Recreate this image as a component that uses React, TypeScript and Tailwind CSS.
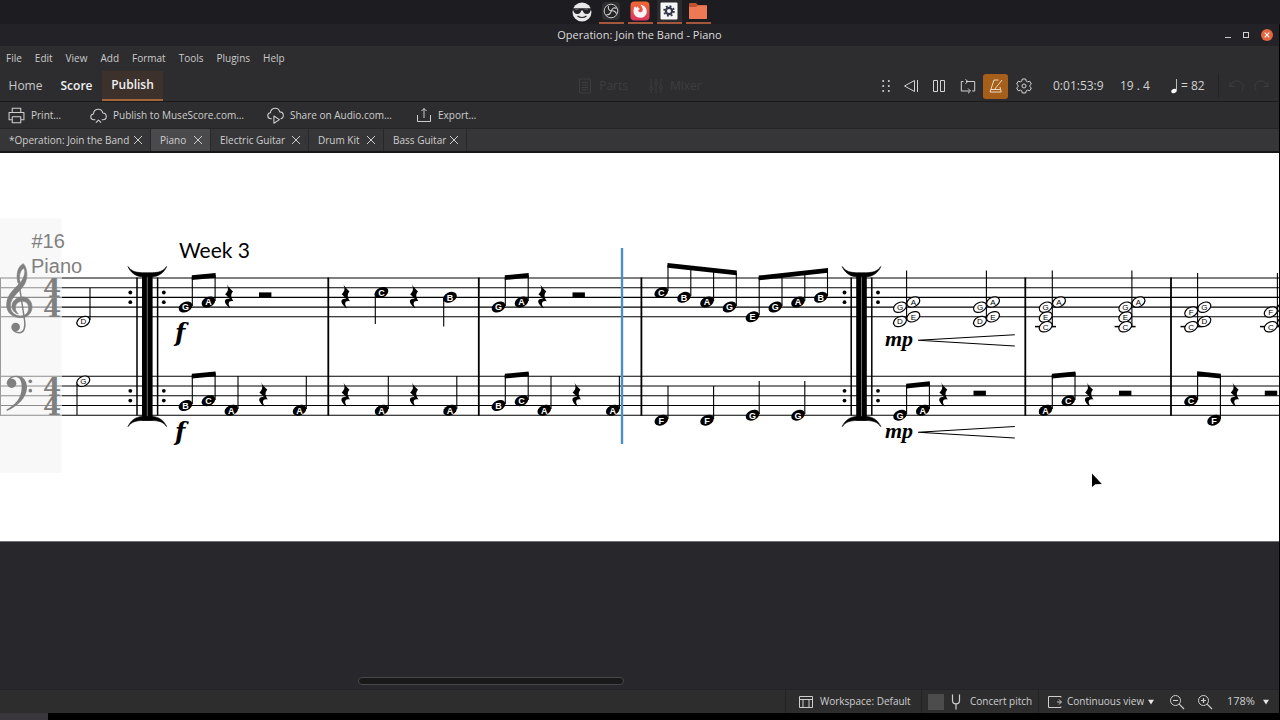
import React from "react";

type IconProps = { children: React.ReactNode; size?: string };

function Icon({ children, size = "size-4" }: IconProps) {
  return (
    <svg viewBox="0 0 16 16" aria-hidden="true" className={`${size} shrink-0`} fill="none" stroke="currentColor" strokeWidth="1" strokeLinejoin="round">
      {children}
    </svg>
  );
}

/* ---------- top dock ---------- */

function Dock() {
  return (
    <nav aria-label="Dock" className="flex h-6 justify-center gap-1 bg-[#1d1c20]">
      <button aria-label="Sunglasses" className="flex w-[25px] items-center justify-center">
        <svg viewBox="0 0 20 20" className="size-5">
          <circle cx="10" cy="10" r="9.500" fill="#e9e9ea" />
          <path d="M.7 6.200h18.600l-.4 1.600c-.5 2.600-1.600 4.200-4.200 4.200-2.400 0-3.600-1.500-3.900-3.400H9.200C8.900 10.500 7.700 12 5.300 12 2.700 12 1.600 10.400 1.100 7.800z" fill="#232227" />
          <path d="M3 7.300h3.500M12.500 7.300H16" stroke="#77777a" strokeWidth=".8" />
          <path d="M5.500 14c2.500 2 6.500 2 9 0" stroke="#232227" strokeWidth="1.200" fill="none" />
        </svg>
      </button>
      <button aria-label="OBS Studio" className="flex w-[25px] items-center justify-center border-b-2 border-[#a5573c]">
        <svg viewBox="0 0 20 20" className="size-5">
          <rect x="1" y="1" width="18" height="18" rx="3.500" fill="#2f2f31" />
          <circle cx="10" cy="10" r="6.800" fill="#242426" stroke="#c9c9cb" strokeWidth="1" />
          <path d="M7.500 4.800c-.6 2.600.4 4.600 2.700 5.200 2.400-.6 4.200.3 5.300 2.700M10.200 10c-.6 2.500-2.400 4-5 3.800M15.600 7.500c-2-1.300-4.300-.6-5.400 2.500" fill="none" stroke="#c9c9cb" strokeWidth="1.100" />
        </svg>
      </button>
      <button aria-label="Firefox" className="flex w-[25px] items-center justify-center border-b-2 border-[#a5573c]">
        <svg viewBox="0 0 20 20" className="size-5">
          <defs>
            <linearGradient id="fox" x1="0" y1="0" x2="0" y2="1">
              <stop offset="0" stopColor="#ee6a35" />
              <stop offset="1" stopColor="#dc3560" />
            </linearGradient>
          </defs>
          <rect x=".5" y=".5" width="19" height="19" rx="4" fill="url(#fox)" />
          <path d="M4.500 5.500c.8.2 1.300.6 1.700 1.200L8 5.200l.3 2 1.700.6-1.800 1.700c.2 1.600 2.600 2.400 3.900 1 1.500-1.700.3-4.600-1.900-6.700 4.300.3 7 3.800 6.500 7.600-.5 3.200-3.200 5.400-6.400 5.400-3.700 0-6.700-2.700-6.800-6.200 0-2 .4-3.500 1-5.100z" fill="#f8f4f5" />
        </svg>
      </button>
      <button aria-label="MuseScore" className="flex w-[25px] items-center justify-center border-b-2 border-[#a5573c] bg-[#2b2a2e]">
        <svg viewBox="0 0 20 20" className="size-5">
          <rect x="1.500" y="1.500" width="17" height="17" rx="1" fill="#f7f7f8" />
          <circle cx="10" cy="10" r="3.100" fill="none" stroke="#33384a" strokeWidth="2.200" />
          <circle cx="10" cy="10" r="4.900" fill="none" stroke="#33384a" strokeWidth="1.800" strokeDasharray="1.900 1.948" />
        </svg>
      </button>
      <button aria-label="Files" className="flex w-[25px] items-center justify-center border-b-2 border-[#a5573c]">
        <svg viewBox="0 0 20 20" className="size-5">
          <path d="M1 3.200Q1 2 2.200 2H8l2 2H18q1 0 1 1v12q0 1-1 1H2q-1 0-1-1z" fill="#c2512f" />
          <path d="M1 6h7l2-1.500h9V17q0 1-1 1H2q-1 0-1-1z" fill="#ee7a55" />
        </svg>
      </button>
    </nav>
  );
}

function TitleBar() {
  return (
    <header className="grid h-[22px] grid-cols-[1fr_auto_1fr] items-center bg-[#232226] text-[#dcdcdc]">
      <span />
      <h1 className="text-[11px] font-medium">Operation: Join the Band - Piano</h1>
      <div className="flex items-center justify-end gap-3 pr-1.5">
        <button aria-label="Minimize" className="flex size-[6px] items-end"><span className="h-px w-1.5 bg-[#c8c8c8]" /></button>
        <button aria-label="Maximize" className="size-[6px] border border-[#d0d0d0]" />
        <button aria-label="Close" className="flex size-3 items-center justify-center rounded-full bg-[#e2663f] text-white">
          <svg viewBox="0 0 12 12" className="size-3" stroke="currentColor" strokeWidth="1.100"><path d="M3.700 3.700l4.600 4.600M8.300 3.700L3.700 8.300" /></svg>
        </button>
      </div>
    </header>
  );
}

/* ---------- menus and tool bars ---------- */

const menus = ["File", "Edit", "View", "Add", "Format", "Tools", "Plugins", "Help"];

function MenuBar() {
  return (
    <nav aria-label="Main menu" className="flex h-[25px] items-center gap-[13px] px-1.5 text-[10px] text-[#cacaca]">
      {menus.map((m) => <button key={m}>{m}</button>)}
    </nav>
  );
}

function Separator() {
  return <span className="h-6 w-px shrink-0 bg-[#232325]" />;
}

function MainToolbar() {
  return (
    <div className="grid h-[31px] grid-cols-[1fr_auto_1fr] border-b border-[#1a1a1b] text-[12px]">
      <nav aria-label="Sections" className="flex items-stretch">
        <a href="#home" className="flex w-[51px] items-center justify-center text-[#c8c8c8]">Home</a>
        <a href="#score" className="flex w-[51px] items-center justify-center font-semibold text-[#f0f0f0]">Score</a>
        <a href="#publish" className="flex w-[61px] items-center justify-center border-b-2 border-[#a5673a] bg-[#3d322b] font-semibold text-[#f0f0f0]">Publish</a>
      </nav>
      <div className="flex items-center gap-5 text-[#3d3d3f]">
        <button disabled className="flex items-center gap-1.5">
          <Icon><path d="M2.500 1h11v14h-11zM5 4.500h6M5 7h6M5 9.500h6M5 12h6" /></Icon>Parts
        </button>
        <button disabled className="flex items-center gap-1.5">
          <Icon><path d="M3 1v8M3 12v3M8 1v3M8 7v8M13 1v7M13 11v4" /><circle cx="3" cy="10.500" r="1.500" /><circle cx="8" cy="5.500" r="1.500" /><circle cx="13" cy="9.500" r="1.500" /></Icon>Mixer
        </button>
      </div>
      <div className="flex items-center justify-end text-[#d2d2d2]">
        <button aria-label="Move toolbar" className="flex w-6 justify-center">
          <svg viewBox="0 0 8 12" className="h-3 w-2" fill="currentColor"><circle cx="1.200" cy="1" r="1" /><circle cx="6.800" cy="1" r="1" /><circle cx="1.200" cy="6" r="1" /><circle cx="6.800" cy="6" r="1" /><circle cx="1.200" cy="11" r="1" /><circle cx="6.800" cy="11" r="1" /></svg>
        </button>
        <button aria-label="Rewind" className="flex w-[25px] justify-center"><Icon><path d="M11.500 2.500v11L1.500 8zM14.500 2v12" /></Icon></button>
        <button aria-label="Pause" className="flex w-[31px] justify-center"><Icon><path d="M2.500 2.500h4v11h-4zM9.500 2.500h4v11h-4z" /></Icon></button>
        <button aria-label="Loop" className="flex w-[27px] justify-center"><Icon><path d="M3.500 3.500h-2.200v9.500h8.200M6 3.500h8.700v9.500h-2.500M5.500 1.200L7.800 3.500 5.500 5.800M8 10.500l2.500 2.500L8 15.300" /></Icon></button>
        <button aria-label="Metronome" className="ml-0.5 flex size-[25px] items-center justify-center rounded-[3px] bg-[#a65f1a] text-[#ecd9c4]"><Icon><path d="M10.500 2H6L2 14h11.200L12 9M2.800 11.500h9.700M6.500 11.500L14 2" /></Icon></button>
        <button aria-label="Playback settings" className="flex w-[31px] justify-center"><Icon><path d="M6.300 1h3.400l.5 2.200 1.300.7 2.200-.7L15.400 6.100 13.700 7.600v.8l1.700 1.500-1.700 2.900-2.200-.7-1.300.7L9.700 15H6.300l-.5-2.200-1.300-.7-2.200.7L.6 9.900 2.300 8.400v-.8L.6 6.100l1.700-2.900 2.200.7 1.300-.7z" /><circle cx="8" cy="8" r="2" /></Icon></button>
        <span className="ml-0.5"><Separator /></span>
        <time className="ml-3 w-[67px]">0:01:53:9</time>
        <span className="w-[51px]">19 . 4</span>
        <button className="flex w-[47px] items-center gap-0.5">
          <svg viewBox="0 0 8 16" className="h-4 w-2"><ellipse cx="3" cy="13" rx="2.800" ry="2" transform="rotate(-20 3 13)" fill="#fff" /><path d="M5.500 12.500V1" stroke="#bbb" strokeWidth="1" /></svg>
          = 82
        </button>
        <Separator />
        <div className="flex gap-2 px-[10px] text-[#3d3d3f]">
          <button disabled aria-label="Undo"><Icon><path d="M1 4v4.500h4.500M1.500 8C3 3.500 8 1.500 11.500 4c3 2 3.500 6 1 9" /></Icon></button>
          <button disabled aria-label="Redo"><Icon><path d="M15 4v4.500h-4.500M14.500 8C13 3.500 8 1.500 4.500 4c-3 2-3.500 6-1 9" /></Icon></button>
        </div>
      </div>
    </div>
  );
}

function PublishToolbar() {
  return (
    <div className="flex h-[27px] items-center border-b border-[#252527] text-[10px] text-[#cecece]">
      <button className="flex w-[82px] items-center gap-1.5 pl-2">
        <Icon size="size-[17px]"><path d="M4 5V1.200h8V5M4 12H1V5.200h14V12h-3M4 9.200h8v5.600H4z" /></Icon>Print…
      </button>
      <button className="flex w-[177px] items-center gap-1.5 pl-2">
        <Icon size="size-[17px]"><path d="M5 12H3.800C-.2 12-.2 6.800 3.300 6.500 3.500 1.200 10.800.6 12 5.600c4.500.2 4.200 6.400.2 6.400H11M5.500 14.800L8 12.300l2.500 2.500" /></Icon>Publish to MuseScore.com…
      </button>
      <button className="flex w-[149px] items-center gap-1.5 pl-2">
        <Icon size="size-[17px]"><path d="M4.500 11H3.800C-.2 11-.2 5.800 3.300 5.500 3.500.2 10.800-.4 12 4.600c4.500.2 4.200 6.400.8 6.400M6.500 8.500v6.800l5.200-3.400z" /></Icon>Share on Audio.com…
      </button>
      <button className="flex items-center gap-1.5 pl-2">
        <Icon><path d="M1.500 8v6.500h13V8M8 11V1.500M5.500 4L8 1.500 10.500 4" /></Icon>Export…
      </button>
    </div>
  );
}

const tabs = [
  { name: "*Operation: Join the Band", box: "w-[151px] bg-[#363638]" },
  { name: "Piano", box: "w-[60px] bg-[#4a4a4c]" },
  { name: "Electric Guitar", box: "w-[98px] bg-[#363638]" },
  { name: "Drum Kit", box: "w-[75px] bg-[#363638]" },
  { name: "Bass Guitar", box: "w-[83px] bg-[#363638]" },
];

function TabStrip() {
  return (
    <div role="tablist" className="flex h-6 border-b-2 border-[#161617] bg-[#363638] text-[10px] text-[#cecece]">
      {tabs.map((t) => (
        <div key={t.name} className={`flex items-center justify-between border-r border-[#28282a] pl-[9px] pr-[7px] ${t.box}`}>
          <button role="tab" aria-selected={t.name === "Piano"} className="whitespace-nowrap">{t.name}</button>
          <button aria-label={`Close ${t.name}`}>
            <svg viewBox="0 0 10 10" className="size-[10px]" stroke="currentColor" strokeWidth="1"><path d="M1 1l8 8M9 1L1 9" /></svg>
          </button>
        </div>
      ))}
    </div>
  );
}

/* ---------- score ---------- */

type NoteData = [letter: string, x: number, y: number];

function Head({ n, open }: { n: NoteData; open?: boolean }) {
  const [letter, x, y] = n;
  return (
    <g>
      <ellipse cx={x} cy={y} rx={open ? 6.8 : 7.2} ry={open ? 4.7 : 5} transform={`rotate(-26 ${x} ${y})`} fill={open ? "#fff" : "#000"} stroke="#000" strokeWidth={open ? 1.2 : 0} />
      {x < 1279 && (
        <text x={x} y={y + (open ? 2.9 : 3.3)} textAnchor="middle" fontSize={open ? 8 : 9} fontWeight={open ? 400 : 700} fill={open ? "#000" : "#fff"}>{letter}</text>
      )}
    </g>
  );
}

function Stem({ x, a, b }: { x: number; a: number; b: number }) {
  return <path d={`M${x} ${a}V${b}`} stroke="#000" strokeWidth="1.100" />;
}

function Beam({ x1, y1, x2, y2 }: { x1: number; y1: number; x2: number; y2: number }) {
  return <path d={`M${x1 - 0.5} ${y1}L${x2 + 0.5} ${y2}v4.800L${x1 - 0.5} ${y1 + 4.8}z`} />;
}

function QuarterRest({ x, y }: { x: number; y: number }) {
  return <path transform={`translate(${x} ${y})`} d="M-3-15.800C-1.500-12 .8-9.500 4-6.500 1.600-3.600 1.600-1.200 4.500 3.200 1.500 2.400-.7 3.600-.3 6.300-.1 7.700.8 9.200 1.500 10.200-.8 9.200-3.600 6.400-4.100 4-4.500 1.200-1.500.2.8 1-.6-.9-2.300-2.300-3.900-3.800-.8-6.600.2-9.200-3-15.800z" />;
}

function HalfRest({ x, y }: { x: number; y: number }) {
  return <rect x={x} y={y - 5} width="12.400" height="5" />;
}

function RepeatBarline({ x }: { x: number }) {
  return (
    <g transform={`translate(${x} 0)`}>
      <path d="M-10.300 277.500V415.500M10.300 277.500V415.500" stroke="#000" strokeWidth="1.500" />
      <rect x="-5.300" y="273" width="10.600" height="147.500" />
      <path d="M0 273V420.500" stroke="#777" strokeWidth=".9" />
      <path d="M0 272.700H-5C-11 272.500-16 271.500-19.300 266.500-17 272.500-11.500 276.500-5 276.800H5C11.500 276.500 17 272.500 19.300 266.500 16 271.500 11 272.500 5 272.700zM0 420.500H-5C-11 420.700-16 421.700-19.300 426.700-17 420.700-11.500 416.700-5 416.400H5C11.500 416.700 17 420.700 19.300 426.700 16 421.700 11 420.700 5 420.500z" stroke="#000" strokeWidth=".6" />
      {[292.5, 302.2, 390.8, 400.6].map((y) => (
        <g key={y}><circle cx="-17" cy={y} r="1.900" /><circle cx="16.500" cy={y} r="1.900" /></g>
      ))}
    </g>
  );
}

const trebleLines = [278, 287.7, 297.4, 307.1, 316.8];
const bassLines = [376.3, 386, 395.7, 405.5, 415.2];

const filled: NoteData[] = [
  ["G", 185.5, 307], ["A", 208.4, 302], ["C", 381.5, 292.5], ["B", 450, 297.3],
  ["G", 498.5, 307], ["A", 521.5, 302],
  ["C", 661.3, 292.5], ["B", 684, 297.3], ["A", 707, 302], ["G", 729.5, 307],
  ["E", 752.5, 316.8], ["G", 775.3, 307], ["A", 798, 302], ["B", 820.8, 297.3],
  ["B", 185.5, 405.5], ["C", 208.4, 400.7], ["A", 231.3, 410.2], ["A", 299.5, 410.2],
  ["A", 381.5, 410.2], ["A", 450, 410.2],
  ["B", 498.5, 405.5], ["C", 521.5, 400.7], ["A", 544.2, 410.2], ["A", 612.7, 410.2],
  ["F", 661.3, 420.2], ["F", 707, 420.2], ["G", 752.5, 415.2], ["G", 798, 415.2],
  ["G", 900, 415.2], ["A", 922.7, 410.2], ["A", 1045.5, 410.2], ["C", 1068.3, 400.7],
  ["C", 1191, 400.7], ["F", 1214, 420.2],
];

const open: NoteData[] = [
  ["D", 83.3, 321.5], ["G", 83.3, 381.2],
  ["G", 900, 307.2], ["A", 913.3, 302], ["E", 913.3, 316.8], ["D", 900, 321.5],
  ["G", 980, 307.2], ["A", 993, 302], ["E", 993, 316.8], ["D", 980, 321.5],
  ["G", 1045.7, 307.2], ["A", 1059, 302], ["E", 1045.7, 317], ["C", 1045.7, 326.7],
  ["G", 1125.3, 307.2], ["A", 1138.5, 302], ["E", 1125.3, 317], ["C", 1125.3, 326.7],
  ["F", 1191.2, 312], ["G", 1204.4, 307.2], ["D", 1204.4, 321.5], ["C", 1191.2, 326.7],
  ["F", 1270.8, 312], ["G", 1284, 307.2], ["D", 1284, 321.5], ["C", 1270.8, 326.7],
];

const stems: [number, number, number][] = [
  [90, 288, 320], [77, 382, 415],
  [192.3, 277, 306], [215.1, 275, 301], [375.3, 293, 324], [443.7, 298, 326.5],
  [505.3, 277, 306], [528.2, 275, 301],
  [668, 265, 291], [690.8, 268, 296], [713.6, 270, 301], [736.3, 273, 306],
  [759.2, 277, 315], [782, 275, 306], [804.8, 272, 301], [827.5, 270, 296],
  [192.3, 375, 404], [215.1, 373, 400], [238, 376, 409], [306.3, 376, 409],
  [388.3, 376, 409], [456.8, 376, 409],
  [505.3, 375, 404], [528.2, 373, 400], [551, 376, 409], [619.4, 376, 409],
  [668, 386, 419], [713.6, 386, 419], [759.2, 381, 414], [804.8, 381, 414],
  [906.6, 386, 414], [929.4, 383, 409], [1052.3, 375, 409], [1075, 373, 400],
  [1197.6, 373, 400], [1220.4, 376, 419],
  [906.6, 270.5, 321], [986.4, 270.5, 321], [1052.3, 270.5, 326], [1131.9, 270.5, 326],
  [1197.6, 273, 326], [1277.4, 273, 326],
];

const beams: [number, number, number, number][] = [
  [192.3, 275.3, 215.1, 273], [505.3, 275.3, 528.2, 273],
  [668, 263, 736.3, 270.5], [759.2, 275.5, 827.5, 268],
  [192.3, 373.8, 215.1, 371.5], [505.3, 373.8, 528.2, 371.5],
  [906.6, 383.8, 929.4, 381.3], [1052.3, 373.8, 1075, 371.5], [1197.6, 371.3, 1220.4, 373.8],
];

const rests: [number, number][] = [
  [229, 298], [345.5, 298], [414, 298], [542.3, 298],
  [263.3, 396.3], [345.5, 396.3], [414, 396.3], [576.5, 396.3],
  [943.3, 396.3], [1089, 396.3], [1234.6, 396.3],
];

const halfRests: [number, number][] = [
  [259, 297.4], [572.5, 297.4], [973.5, 395.7], [1119, 395.7], [1264.8, 395.7],
];

function Clefs() {
  return (
    <g transform="translate(0 255) scale(.3333)">
      <path d="M70 26C54 33 47 58 54 84L60 82C55 62 62 44 71 40 77 46 75 62 66 76 52 98 20 113 20 150 20 175 40 188 62 188 82 188 96 175 96 156 96 138 84 126 68 126 50 126 36 138 36 153 36 165 44 174 55 177 49 171 46 165 46 158 46 147 55 139 67 139 79 139 86 147 86 159 86 173 76 183 62 183 45 183 31 172 31 153 31 122 67 108 77 80 84 60 80 36 70 26z" stroke="#808080" strokeWidth="2" />
      <path d="M56 78L74 198C77 218 72 233 57 233 48 233 40 228 37 220" fill="none" stroke="#808080" strokeWidth="4.500" />
      <circle cx="47" cy="216" r="13" />
      <path d="M20 388C20 372 33 362 49 362 69 362 81 376 81 397 81 430 50 456 21 468L19 464C46 449 65 430 65 396 65 378 59 366 47 366 40 366 34 369 31 374z" />
      <circle cx="35" cy="385" r="14" />
      <circle cx="91" cy="379" r="5.500" />
      <circle cx="91" cy="407" r="5.500" />
    </g>
  );
}

function Score() {
  return (
    <svg role="img" aria-label="Piano score" width="1279" height="388" viewBox="0 153 1279 388" className="max-w-none font-['Liberation_Sans',sans-serif]">
      <rect x="0" y="218.500" width="61.500" height="254.500" fill="#f8f8f8" />
      {[...trebleLines, ...bassLines].map((y) => (
        <g key={y}>
          <path d={`M0 ${y}H62`} stroke="#8c8c8c" strokeWidth="1.100" />
          <path d={`M62 ${y}H1279`} stroke="#000" strokeWidth="1.100" />
        </g>
      ))}
      <path d="M.5 278V415" stroke="#9a9a9a" />

      <g fill="#808080">
        <text x="31.500" y="248" fontSize="20">#16</text>
        <text x="31" y="273" fontSize="20">Piano</text>
        <g className="font-['DejaVu_Serif',serif]" fontSize="26" fontWeight="700">
          <text x="43" y="297">4</text>
          <text x="43" y="316.500">4</text>
          <text x="43" y="395.500">4</text>
          <text x="43" y="415">4</text>
        </g>
        <Clefs />
      </g>

      <text x="179" y="258" fontSize="21" className="font-['Lato',sans-serif]">Week 3</text>

      {[328.3, 478.8, 641.4, 1025.3, 1171].map((x) => (
        <path key={x} d={`M${x} 277.500V415.700`} stroke="#000" strokeWidth="1.800" />
      ))}
      <RepeatBarline x={147.3} />
      <RepeatBarline x={861.5} />

      {[1035, 1114.6, 1180.5, 1260].map((x) => (
        <path key={x} d={`M${x} 326.600h21`} stroke="#000" strokeWidth="1.500" />
      ))}
      {beams.map(([x1, y1, x2, y2]) => <Beam key={`${x1}-${y1}`} x1={x1} y1={y1} x2={x2} y2={y2} />)}
      {stems.map(([x, a, b]) => <Stem key={`${x}-${a}`} x={x} a={a} b={b} />)}
      {filled.map((n) => <Head key={n.join()} n={n} />)}
      {open.map((n) => <Head key={n.join()} n={n} open />)}
      {rests.map(([x, y]) => <QuarterRest key={`${x}-${y}`} x={x} y={y} />)}
      {halfRests.map(([x, y]) => <HalfRest key={x} x={x} y={y} />)}

      <g fontWeight="700" fontStyle="italic">
        <text x="175" y="341" fontSize="24" className="font-['DejaVu_Serif',serif]">f</text>
        <text x="175" y="439.500" fontSize="24" className="font-['DejaVu_Serif',serif]">f</text>
        <text x="885" y="346" fontSize="22" className="font-['Liberation_Serif',serif]">mp</text>
        <text x="885" y="438" fontSize="22" className="font-['Liberation_Serif',serif]">mp</text>
      </g>
      <path d="M1014.800 334.700L918 340.300 1014.800 346M1014.800 426.500L918 432.200 1014.800 438" fill="none" stroke="#000" strokeWidth="1.100" />
      <path d="M622 248V444" stroke="#4a90c4" strokeWidth="2.400" />
      <path d="M1092 473.500v13.500l3.300-2.700 6.500-.3z" />
    </svg>
  );
}

function Canvas() {
  return (
    <main className="flex flex-1 flex-col bg-[#28272c]">
      <div id="score" className="overflow-hidden border-b border-[#6d7074] bg-white"><Score /></div>
      <div className="flex flex-1 items-end pb-1">
        <div role="scrollbar" aria-controls="score" aria-valuenow={38} className="ml-[28%] h-2 w-[266px] rounded-full border border-[#48484b] bg-[#19191a]" />
      </div>
    </main>
  );
}

/* ---------- status bar ---------- */

function Caret() {
  return <svg viewBox="0 0 6 6" className="pointer-events-none size-[6px] shrink-0" fill="#e6e6e6"><path d="M0 .8h6L3 5.500z" /></svg>;
}

function StatusBar() {
  return (
    <footer className="flex h-6 items-center justify-end border-t border-[#242426] bg-[#2d2d2e] text-[10px] text-[#cecece]">
      <Separator />
      <button className="flex w-[135px] items-center gap-1.5 pl-3">
        <Icon><path d="M1.500 2.500h13v11h-13zM1.500 5.500h13M5 5.500v8M11 5.500v8" /></Icon>Workspace: Default
      </button>
      <Separator />
      <label className="flex w-[116px] items-center pl-1.5">
        <input type="checkbox" className="size-4 shrink-0 appearance-none bg-[#4c4c4d]" />
        <span className="mr-0.5 flex w-6 justify-center"><Icon><path d="M4.500 .5v6C4.500 11 11.500 11 11.500 6.500v-6M8 10v5.500" strokeWidth="1.200" /></Icon></span>
        <span className="whitespace-nowrap">Concert pitch</span>
      </label>
      <Separator />
      <label className="flex w-[124px] items-center gap-1 pl-2">
        <Icon><path d="M14 2.500H1.500v11H14M14 2.500v1M14 12.500v1M10 8h4M12 5.500L14.500 8 12 10.500" /></Icon>
        <select aria-label="View mode" className="w-[77px] appearance-none bg-transparent"><option>Continuous view</option></select>
        <Caret />
      </label>
      <button aria-label="Zoom out" className="flex w-7 justify-center"><Icon><circle cx="6.500" cy="6.500" r="5" /><path d="M10.200 10.200L15 15M4 6.500h5" strokeWidth="1.200" /></Icon></button>
      <button aria-label="Zoom in" className="flex w-7 justify-center"><Icon><circle cx="6.500" cy="6.500" r="5" /><path d="M10.200 10.200L15 15M4 6.500h5M6.500 4v5" strokeWidth="1.200" /></Icon></button>
      <label className="flex items-center gap-1 pl-2 pr-[10px]">
        <select aria-label="Zoom" className="w-8 appearance-none bg-transparent text-[11px]"><option>178%</option></select>
        <Caret />
      </label>
    </footer>
  );
}

export default function App() {
  return (
    <div className="flex min-h-screen flex-col bg-black font-['Open_Sans','Noto_Sans',sans-serif]">
      <Dock />
      <div className="flex flex-1 flex-col border-r border-black bg-[#2d2d2f]">
        <TitleBar />
        <MenuBar />
        <MainToolbar />
        <PublishToolbar />
        <TabStrip />
        <Canvas />
        <StatusBar />
      </div>
      <div className="h-[7px] bg-black"><div className="h-full w-12 bg-[#39373c]" /></div>
    </div>
  );
}
